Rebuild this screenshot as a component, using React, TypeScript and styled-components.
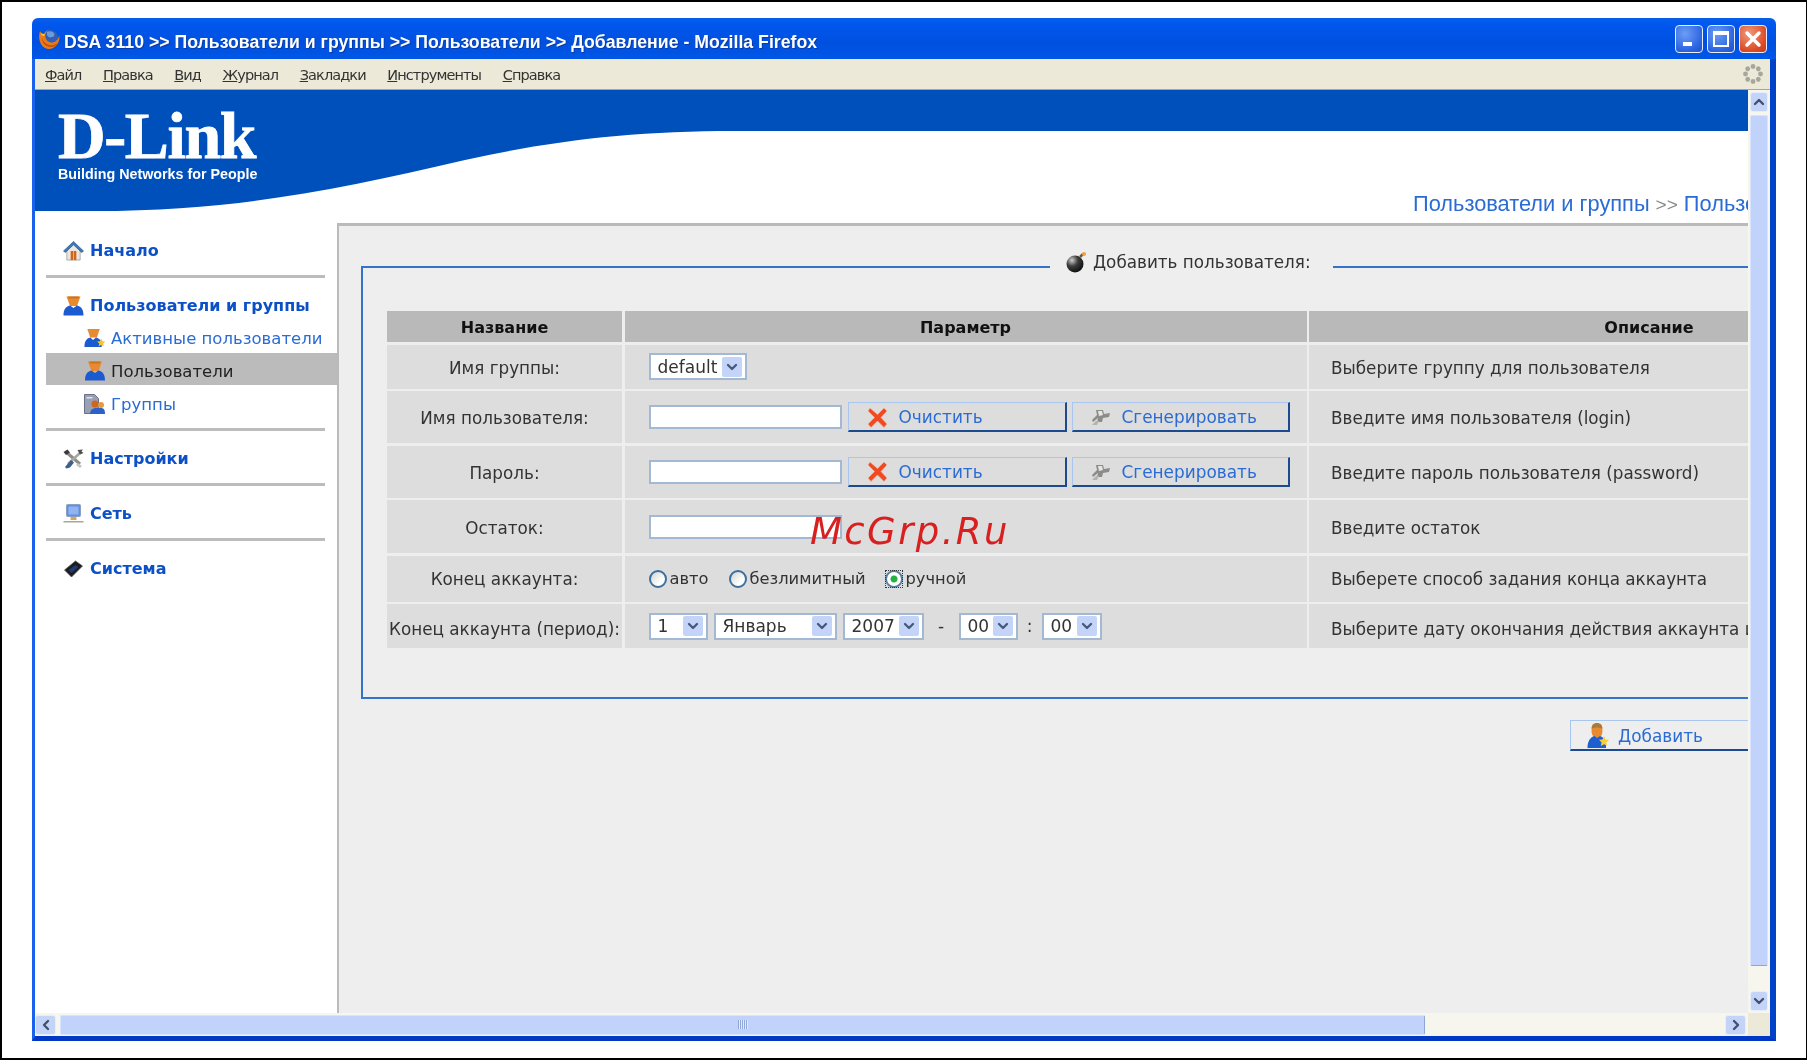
import React from 'react';
import styled, { createGlobalStyle } from 'styled-components';
import { ChevronDown, ChevronLeft, ChevronRight, ChevronUp } from 'lucide-react';

const FONT = '"DejaVu Sans", Verdana, sans-serif';
const LINK = '#2a6cd4';

const GlobalStyle = createGlobalStyle`
  html, body {
    margin: 0;
    padding: 0;
    background: #fff;
  }
  * {
    box-sizing: border-box;
  }
`;

const Page = styled.div`
  width: 1807px;
  height: 1060px;
  padding: 16px 30px 17px 30px;
  background: #fff;
  border: solid #000;
  border-width: 2px 1px 2px 2px;
  font-family: ${FONT};
  overflow: hidden;
  filter: blur(0.45px);
`;

const Window = styled.div`
  width: 1744px;
  height: 1023px;
  display: flex;
  flex-direction: column;
`;

const TitleBar = styled.div`
  height: 41px;
  flex: none;
  display: flex;
  align-items: center;
  padding: 0 9px 0 6px;
  border-radius: 6px 6px 0 0;
  background: linear-gradient(#0a5fe8 0%, #0058ee 12%, #0050e0 60%, #0057e6 100%);
`;

const TitleText = styled.div`
  flex: 1;
  margin-left: 3px;
  padding-top: 7px;
  color: #fff;
  font: bold 17.7px 'Liberation Sans', Arial, sans-serif;
  text-shadow: 1px 1px 0 #0a3ca8;
  white-space: nowrap;
`;

const WinButtons = styled.div`
  display: flex;
  gap: 4px;
`;

const WinButton = styled.div<{ $close?: boolean }>`
  width: 28px;
  height: 28px;
  display: flex;
  align-items: center;
  justify-content: center;
  border: 1px solid #e8eefc;
  border-radius: 4px;
  background: ${(p) =>
    p.$close
      ? 'radial-gradient(circle at 35% 30%, #f09a7c, #dc4a22 70%, #c23a18)'
      : 'radial-gradient(circle at 35% 30%, #6d9df5, #2a63e0 70%, #1f50c8)'};
`;

const WindowFrame = styled.div`
  flex: 1;
  min-height: 0;
  display: flex;
  flex-direction: column;
  border-style: solid;
  border-width: 0 6px 5px 3px;
  border-color: #0042d6 #0042c8 #0038c4 #1a62ee;
`;

const MenuBar = styled.div`
  height: 31px;
  flex: none;
  display: flex;
  align-items: center;
  justify-content: space-between;
  padding: 0 6px 0 10px;
  background: #ece9d8;
  border-bottom: 1px solid #a8a698;
  color: #333;
`;

const MenuList = styled.div`
  display: flex;
  gap: 21.5px;
  padding-top: 2px;
  font: 14.5px 'DejaVu Sans', Verdana, sans-serif;
  letter-spacing: -0.9px;
`;

const MenuKey = styled.span`
  text-decoration: underline;
`;

const Body = styled.div`
  flex: 1;
  min-height: 0;
  display: grid;
  grid-template-columns: 1fr 22px;
  grid-template-rows: 1fr 23px;
`;

const Viewport = styled.div`
  position: relative;
  min-width: 0;
  min-height: 0;
  display: flex;
  flex-direction: column;
  overflow: hidden;
  background: #fff;
`;

const Header = styled.header`
  position: relative;
  height: 133px;
  flex: none;
`;

const HeaderCurve = styled.svg`
  position: absolute;
  inset: 0;
  width: 100%;
  height: 100%;
`;

const Logo = styled.div`
  position: absolute;
  left: 23px;
  top: 19px;
  color: #fff;
`;

const LogoMark = styled.div`
  font: bold 66px/54px 'Liberation Serif', 'Times New Roman', serif;
  letter-spacing: -1.4px;
  -webkit-text-stroke: 0.8px #fff;
`;

const LogoTag = styled.div`
  margin-top: 4px;
  font: bold 14.3px/15px 'Liberation Sans', Arial, sans-serif;
  white-space: nowrap;
`;

const Breadcrumb = styled.div`
  position: absolute;
  left: 1378px;
  bottom: 5px;
  font: 21.8px/26px 'Liberation Sans', Arial, sans-serif;
  color: ${LINK};
  white-space: nowrap;
`;

const BreadcrumbSep = styled.span`
  color: #888;
  font-size: 19px;
`;

const Main = styled.div`
  flex: 1;
  min-height: 0;
  display: flex;
`;

const Sidebar = styled.nav`
  width: 302px;
  flex: none;
  padding-top: 11px;
`;

const NavRow = styled.a<{ $sub?: boolean; $active?: boolean; $gap?: boolean }>`
  height: 32px;
  display: flex;
  align-items: center;
  margin-left: 11px;
  margin-top: ${(p) => (p.$gap ? '2px' : '0')};
  padding-left: ${(p) => (p.$sub ? '38px' : '17px')};
  padding-top: ${(p) => (p.$active ? '4px' : p.$sub ? '2px' : '1px')};
  gap: ${(p) => (p.$sub ? '5px' : '6px')};
  font-family: ${FONT};
  font-size: ${(p) => (p.$sub ? '16.5px' : '16px')};
  font-weight: ${(p) => (p.$sub ? 'normal' : 'bold')};
  color: ${(p) => (p.$active ? '#222' : p.$sub ? LINK : '#0c50c8')};
  background: ${(p) => (p.$active ? '#bbbbbb' : 'transparent')};
  white-space: nowrap;

  svg {
    width: ${(p) => (p.$sub ? '22px' : '21px')};
    flex: none;
  }
`;

const NavDivider = styled.div`
  height: 3px;
  width: 279px;
  margin: 9px 0 11px 11px;
  background: #bcbcbc;
`;

const Content = styled.main`
  flex: 1;
  min-width: 0;
  display: flex;
  flex-direction: column;
  align-items: flex-start;
  overflow: hidden;
  padding: 23px 0 0 22px;
  background: #eeeeee;
  border-top: 3px solid #bababa;
  border-left: 2px solid #bababa;
`;

const Fieldset = styled.fieldset`
  width: 1656px;
  flex: none;
  margin: 0;
  padding: 26px 0 49px 24px;
  border: 2px solid #3572cc;
  min-width: 0;
`;

const Legend = styled.legend`
  display: flex;
  align-items: center;
  gap: 6px;
  height: 36px;
  margin-left: 663px;
  padding: 0 22px 10px 16px;
  font-size: 16.8px;
  color: #333;
  white-space: nowrap;
`;

const FormGrid = styled.div`
  display: grid;
  grid-template-columns: 235px 682px 680px;
  grid-template-rows: 31px 44px 52px 52px 53px 46px 44px;
  gap: 2.5px;
  font-size: 16.8px;
  color: #333;
`;

const HeadCell = styled.div`
  display: flex;
  align-items: center;
  justify-content: center;
  padding-top: 2px;
  background: #b9b9b9;
  color: #111;
  font-size: 16px;
  font-weight: bold;
`;

const LabelCell = styled.div<{ $dy?: number }>`
  display: flex;
  align-items: center;
  justify-content: center;
  padding-top: ${(p) => p.$dy ?? 2}px;
  background: #dddddd;
  white-space: nowrap;
`;

const ControlCell = styled.div`
  display: flex;
  align-items: center;
  padding-left: 24px;
  background: #dddddd;
`;

const DescCell = styled.div<{ $dy?: number }>`
  display: flex;
  align-items: center;
  padding-left: 22px;
  padding-top: ${(p) => p.$dy ?? 2}px;
  background: #dddddd;
  white-space: nowrap;
`;

const TextInput = styled.input`
  width: 193px;
  height: 24px;
  margin: 0 6px 0 0;
  padding: 0 4px;
  background: #fff;
  border: 2px solid #a3b8d2;
`;

const ActionButton = styled.button<{ $w: number }>`
  width: ${(p) => p.$w}px;
  height: 30px;
  flex: none;
  display: flex;
  align-items: center;
  gap: 11px;
  padding: 1px 0 0 18px;
  margin: 0 5px 0 0;
  background: #dddddd;
  border-style: solid;
  border-width: 1px 2px 2px 1px;
  border-color: #a9c6ee #1c4a8e #1c4a8e #a9c6ee;
  color: ${LINK};
  font-family: ${FONT};
  font-size: 16.9px;
  white-space: nowrap;
`;

const SelectBox = styled.div<{ $w: number }>`
  width: ${(p) => p.$w}px;
  height: 27px;
  flex: none;
  display: flex;
  align-items: center;
  justify-content: space-between;
  padding: 0 3px 0 7px;
  background: #fff;
  border: 2px solid #a3b8d2;
  font-size: 17px;
  color: #333;
  white-space: nowrap;
`;

const SelectArrow = styled.span`
  width: 20px;
  height: 20px;
  flex: none;
  display: flex;
  align-items: center;
  justify-content: center;
  border-radius: 2px;
  background: #c4d4f8;
  color: #46597c;
`;

const SelectRow = styled.div`
  display: flex;
  align-items: center;
  gap: 6px;
`;

const TimeSep = styled.span<{ $w: number }>`
  width: ${(p) => p.$w}px;
  margin: 0 -6px;
  text-align: center;
  font-size: 17px;
`;

const RadioGroup = styled.label<{ $w: number }>`
  width: ${(p) => p.$w}px;
  flex: none;
  display: flex;
  align-items: center;
  gap: 3px;
  font-size: 16.3px;
`;

const RadioDot = styled.span<{ $on?: boolean }>`
  position: relative;
  width: 18px;
  height: 18px;
  flex: none;
  border-radius: 50%;
  border: 2px solid ${(p) => (p.$on ? '#557f9e' : '#3a6f9e')};
  background: ${(p) =>
    p.$on
      ? 'radial-gradient(circle, #28b040 0 3px, #fff 4px)'
      : 'linear-gradient(135deg, #d4d4cc, #fff 70%)'};
  &::after {
    content: '';
    display: ${(p) => (p.$on ? 'block' : 'none')};
    position: absolute;
    inset: -2px;
    border: 1px dotted #333;
  }
`;

const Watermark = styled.div`
  position: absolute;
  left: 775px;
  top: 419px;
  font: oblique 37px/46px 'DejaVu Sans', sans-serif;
  letter-spacing: 2.4px;
  color: #d82020;
  white-space: nowrap;
  pointer-events: none;
`;

const AddButton = styled(ActionButton)`
  margin: 21px 0 0 1209px;
  height: 31px;
  flex-shrink: 0;
  padding-left: 16px;
  gap: 8px;
  background: #eeeeee;
  border-width: 1px 0 2px 1px;
`;

const VTrack = styled.div`
  display: flex;
  flex-direction: column;
  align-items: center;
  padding: 2px 2px 2px;
  background: #f6f5ee;
`;

const ScrollBtn = styled.div`
  width: 18px;
  height: 20px;
  flex: none;
  display: flex;
  align-items: center;
  justify-content: center;
  border: 1px solid #e6eefc;
  border-radius: 3px;
  background: #c3d4f8;
  color: #42506c;
`;

const VThumb = styled.div`
  width: 18px;
  height: 851px;
  margin-top: 3px;
  background: #c1d3fa;
  border: 1px solid #d8e4fc;
  border-bottom-color: #8ea6d4;
  border-radius: 2px;
`;

const VSpace = styled.div`
  flex: 1;
`;

const HTrack = styled.div`
  display: flex;
  align-items: center;
  padding: 0 2px 0 0;
  background: #f6f5ee;
`;

const HThumb = styled.div`
  width: 1365px;
  height: 20px;
  margin-left: 4px;
  display: flex;
  align-items: center;
  justify-content: center;
  background: #c1d3fa;
  border: 1px solid #d8e4fc;
  border-right-color: #8ea6d4;
  border-radius: 2px;
`;

const ThumbGrip = styled.div`
  width: 10px;
  height: 9px;
  background: repeating-linear-gradient(90deg, #8fa8d8 0 1px, #e4ecfc 1px 2px);
`;

const HBtn = styled(ScrollBtn)`
  width: 21px;
`;

const Corner = styled.div`
  background: #ece9d8;
`;

function FirefoxIcon() {
  return (
    <svg width="23" height="21" viewBox="0 0 23 21">
      <circle cx="12" cy="10" r="8" fill="#2f5fb8" />
      <path d="M9 4c2-1 5-1 7 1 1 2 0 4-2 4-2 1-4 0-5-2z" fill="#6f9ad8" />
      <path d="M2 3c1 2 2 3 4 3 1-2 3-4 6-5C8 3 6 7 8 11c2 4 7 5 11 1 1-1 2-3 2-5 2 6-3 14-10 14C4 21-1 12 2 3z" fill="#ea7a16" />
      <path d="M4 10c0 5 4 9 9 9 3 0 6-2 7-5-2 3-6 4-9 3-4-1-6-4-7-7z" fill="#c24c0c" />
      <path d="M3 5c0 2 1 3 3 3l1-2C5 6 4 6 3 5z" fill="#f8c83e" />
    </svg>
  );
}

function Throbber() {
  const dots = [0, 45, 90, 135, 180, 225, 270, 315];
  return (
    <svg width="22" height="22" viewBox="0 0 22 22">
      {dots.map((d) => (
        <circle key={d} cx="11" cy="3.5" r="2.4" fill="#a6a69c" transform={`rotate(${d} 11 11)`} />
      ))}
    </svg>
  );
}

function HomeIcon() {
  return (
    <svg height="20" viewBox="0 0 22 21">
      <path d="M4 9v11h14V9L11 3z" fill="#ece8e0" stroke="#8a8a8a" strokeWidth=".7" />
      <path d="M0.500 10.500 11 0.500 21.500 10.500l-2 1.500L11 4 2.500 12z" fill="#3f78b4" stroke="#245490" strokeWidth=".7" />
      <rect x="8" y="10.500" width="6" height="9.500" fill="#d2651c" />
      <rect x="10.500" y="10.500" width="1" height="9.500" fill="#f4b27a" />
    </svg>
  );
}

function UserIcon() {
  return (
    <svg height="20" viewBox="0 0 21 20">
      <path d="M3.500 0.500h14l-3.500 9.500h-7z" fill="#e88a30" />
      <path d="M5 0.500h11l-.5 2h-10z" fill="#c87420" />
      <path d="M0.500 19.500c0-6 2-9 6.500-10l3.500 2.500 3.500-2.500c4.500 1 6.500 4 6.500 10z" fill="#1c5ad0" />
    </svg>
  );
}

function ActiveUserIcon() {
  return (
    <svg height="20" viewBox="0 0 23 20">
      <path d="M3.500 0.500h13l-3 9h-7z" fill="#e88a30" />
      <path d="M0.500 19.500c0-6 2-9 6-10l3 2.500 3-2.500c3 1 5 2 6 5v5z" fill="#1c5ad0" />
      <path d="M18 10.500l1.300 2.800 3 .3-2.200 2.100.6 3-2.700-1.500-2.700 1.500.6-3-2.200-2.100 3-.3z" fill="#f5c62a" />
    </svg>
  );
}

function GroupIcon() {
  return (
    <svg height="20" viewBox="0 0 22 20">
      <path d="M0.500 0.500h10l4 4v15h-14z" fill="#9aa0b4" stroke="#6a7088" />
      <rect x="2.500" y="3" width="6" height="1.500" fill="#dfe2ea" />
      <circle cx="11" cy="10" r="3.500" fill="#d0661e" />
      <circle cx="17" cy="11" r="3" fill="#e89a3a" />
      <path d="M6 20c0-4 3-6 6-6h5c3 0 4 2 4 6z" fill="#2c62c8" />
    </svg>
  );
}

function ToolsIcon() {
  return (
    <svg height="20" viewBox="0 0 21 20">
      <path d="M3 3l14 12" stroke="#8c8c88" strokeWidth="3" />
      <path d="M18 3 5 15" stroke="#a6a6a2" strokeWidth="2.500" />
      <path d="M8 11 2 18l1.500 1.500 3.500-1 4-5z" fill="#3c5f8c" />
      <path d="M0.500 3l4-2.500 2.500 3-4 2.500z" fill="#3a3a38" />
      <path d="M14.500 1l5.500-.5-1.500 2 2 1.500-3.500 1.500z" fill="#50504c" />
      <path d="M15 14l4 3-2 2-4-3z" fill="#c4c4c0" />
    </svg>
  );
}

function NetworkIcon() {
  return (
    <svg height="20" viewBox="0 0 20 20">
      <rect x="3" y="0.500" width="14" height="12" rx="1" fill="#5f8fe0" stroke="#8aa0c4" />
      <rect x="5" y="2.500" width="10" height="8" fill="#8fb4f0" />
      <rect x="7" y="13" width="6" height="3" fill="#d8a85a" />
      <rect x="0" y="17" width="20" height="1.500" fill="#a8a89a" />
    </svg>
  );
}

function ChipIcon() {
  return (
    <svg height="20" viewBox="0 0 20 20">
      <path d="M1 11 12 2l7 5-11 11z" fill="#1c1c20" stroke="#555" strokeWidth=".8" />
      <path d="M5 11l7-5 3 2-7 6z" fill="#203a78" />
    </svg>
  );
}

function BombIcon() {
  return (
    <svg width="21" height="22" viewBox="0 0 21 22">
      <defs>
        <radialGradient id="bomb" cx="32%" cy="28%" r="78%">
          <stop offset="0" stopColor="#d0d0d0" />
          <stop offset=".45" stopColor="#3e3e3e" />
          <stop offset="1" stopColor="#0c0c0c" />
        </radialGradient>
      </defs>
      <circle cx="9" cy="13" r="8.500" fill="url(#bomb)" />
      <path d="M14 6l3-3" stroke="#6c5a3e" strokeWidth="2.500" />
      <circle cx="18" cy="3" r="2" fill="#f0a040" />
    </svg>
  );
}

function ClearIcon() {
  return (
    <svg width="21" height="21" viewBox="0 0 21 21">
      <path d="M3 1 10.500 7.500 17 1l3 3-6 6.500L20 17l-3 3.500-6.500-6.500L4 20.500 1 17l6.500-6.500L1 4z" fill="#ee4a24" stroke="#f6b8a0" strokeWidth=".6" />
    </svg>
  );
}

function GenerateIcon() {
  return (
    <svg width="20" height="18" viewBox="0 0 20 18">
      <path d="M5 2h7l1 4 6-1-1 4-6 1-1 4H6l1-4-5 4-1-2 5-5z" fill="#8c8c88" />
      <path d="M7 3h4l1 4-4 1z" fill="#e6e6e2" />
      <path d="M1 17l4-4h3l-2 4z" fill="#b4b4ae" />
    </svg>
  );
}

function AddUserIcon() {
  return (
    <svg width="23" height="26" viewBox="0 0 23 26">
      <ellipse cx="10" cy="8" rx="5.500" ry="7.500" fill="#e88a30" />
      <path d="M4.500 6c0-4 2-6 5.500-6s5.500 2 5.500 6c-2-2-9-2-11 0z" fill="#a87a3c" />
      <path d="M0.500 25c0-7 3-11 7-12l2.500 2 3-2c3 1 5 3 6 7v5z" fill="#1e5fd0" />
      <path d="M17 13l1.500 3.400 3.500.4-2.600 2.600.8 3.600-3.200-1.800-3.200 1.800.8-3.600L12 16.800l3.500-.4z" fill="#f8cf3a" />
    </svg>
  );
}

function Select({ w, value }: { w: number; value: string }) {
  return (
    <SelectBox $w={w}>
      {value}
      <SelectArrow>
        <ChevronDown size={16} strokeWidth={3.5} />
      </SelectArrow>
    </SelectBox>
  );
}

function CredentialControls() {
  return (
    <>
      <TextInput />
      <ActionButton $w={219}>
        <ClearIcon />
        Очистить
      </ActionButton>
      <ActionButton $w={218}>
        <GenerateIcon />
        Сгенерировать
      </ActionButton>
    </>
  );
}

export default function App() {
  return (
    <Page>
      <GlobalStyle />
      <Window>
        <TitleBar>
          <FirefoxIcon />
          <TitleText>DSA 3110 &gt;&gt; Пользователи и группы &gt;&gt; Пользователи &gt;&gt; Добавление - Mozilla Firefox</TitleText>
          <WinButtons>
            <WinButton>
              <svg width="16" height="16" viewBox="0 0 16 16">
                <rect x="2" y="11" width="9" height="4" fill="#fff" />
              </svg>
            </WinButton>
            <WinButton>
              <svg width="18" height="18" viewBox="0 0 18 18">
                <path d="M2 2h14v14H2z" fill="none" stroke="#fff" strokeWidth="2" />
                <path d="M2 3.500h14" stroke="#fff" strokeWidth="3" />
              </svg>
            </WinButton>
            <WinButton $close>
              <svg width="18" height="18" viewBox="0 0 18 18">
                <path d="M3 3l12 12M15 3 3 15" stroke="#fff" strokeWidth="3.500" strokeLinecap="round" />
              </svg>
            </WinButton>
          </WinButtons>
        </TitleBar>
        <WindowFrame>
          <MenuBar>
            <MenuList>
              <span><MenuKey>Ф</MenuKey>айл</span>
              <span><MenuKey>П</MenuKey>равка</span>
              <span><MenuKey>В</MenuKey>ид</span>
              <span><MenuKey>Ж</MenuKey>урнал</span>
              <span><MenuKey>З</MenuKey>акладки</span>
              <span><MenuKey>И</MenuKey>нструменты</span>
              <span><MenuKey>С</MenuKey>правка</span>
            </MenuList>
            <Throbber />
          </MenuBar>
          <Body>
            <Viewport>
              <Header>
                <HeaderCurve viewBox="0 0 1713 133" preserveAspectRatio="none">
                  <path d="M0 0H1713V41H700C600 41 520 50 430 70 300 100 200 121 60 121H0Z" fill="#0050bc" />
                </HeaderCurve>
                <Logo>
                  <LogoMark>D-Link</LogoMark>
                  <LogoTag>Building Networks for People</LogoTag>
                </Logo>
                <Breadcrumb>
                  Пользователи и группы <BreadcrumbSep>&gt;&gt;</BreadcrumbSep> Пользователи
                </Breadcrumb>
              </Header>
              <Main>
                <Sidebar>
                  <NavRow><HomeIcon />Начало</NavRow>
                  <NavDivider />
                  <NavRow><UserIcon />Пользователи и группы</NavRow>
                  <NavRow $sub><ActiveUserIcon />Активные пользователи</NavRow>
                  <NavRow $sub $active><UserIcon />Пользователи</NavRow>
                  <NavRow $sub $gap><GroupIcon />Группы</NavRow>
                  <NavDivider />
                  <NavRow><ToolsIcon />Настройки</NavRow>
                  <NavDivider />
                  <NavRow><NetworkIcon />Сеть</NavRow>
                  <NavDivider />
                  <NavRow><ChipIcon />Система</NavRow>
                </Sidebar>
                <Content>
                  <Fieldset>
                    <Legend><BombIcon />Добавить пользователя:</Legend>
                    <FormGrid>
                      <HeadCell>Название</HeadCell>
                      <HeadCell>Параметр</HeadCell>
                      <HeadCell>Описание</HeadCell>

                      <LabelCell>Имя группы:</LabelCell>
                      <ControlCell><Select w={98} value="default" /></ControlCell>
                      <DescCell>Выберите группу для пользователя</DescCell>

                      <LabelCell>Имя пользователя:</LabelCell>
                      <ControlCell><CredentialControls /></ControlCell>
                      <DescCell>Введите имя пользователя (login)</DescCell>

                      <LabelCell>Пароль:</LabelCell>
                      <ControlCell><CredentialControls /></ControlCell>
                      <DescCell>Введите пароль пользователя (password)</DescCell>

                      <LabelCell>Остаток:</LabelCell>
                      <ControlCell><TextInput /></ControlCell>
                      <DescCell>Введите остаток</DescCell>

                      <LabelCell $dy={0}>Конец аккаунта:</LabelCell>
                      <ControlCell>
                        <RadioGroup $w={80}><RadioDot />авто</RadioGroup>
                        <RadioGroup $w={156}><RadioDot />безлимитный</RadioGroup>
                        <RadioGroup $w={100}><RadioDot $on />ручной</RadioGroup>
                      </ControlCell>
                      <DescCell $dy={0}>Выберете способ задания конца аккаунта</DescCell>

                      <LabelCell $dy={5}>Конец аккаунта (период):</LabelCell>
                      <ControlCell>
                        <SelectRow>
                          <Select w={59} value="1" />
                          <Select w={123} value="Январь" />
                          <Select w={81} value="2007" />
                          <TimeSep $w={35}>-</TimeSep>
                          <Select w={59} value="00" />
                          <TimeSep $w={24}>:</TimeSep>
                          <Select w={60} value="00" />
                        </SelectRow>
                      </ControlCell>
                      <DescCell $dy={5}>Выберите дату окончания действия аккаунта и времени</DescCell>
                    </FormGrid>
                  </Fieldset>
                  <AddButton $w={220}><AddUserIcon />Добавить</AddButton>
                </Content>
              </Main>
              <Watermark>McGrp.Ru</Watermark>
            </Viewport>
            <VTrack>
              <ScrollBtn><ChevronUp size={16} strokeWidth={3.5} /></ScrollBtn>
              <VThumb />
              <VSpace />
              <ScrollBtn><ChevronDown size={16} strokeWidth={3.5} /></ScrollBtn>
            </VTrack>
            <HTrack>
              <HBtn><ChevronLeft size={16} strokeWidth={3.5} /></HBtn>
              <HThumb><ThumbGrip /></HThumb>
              <VSpace />
              <HBtn><ChevronRight size={16} strokeWidth={3.5} /></HBtn>
            </HTrack>
            <Corner />
          </Body>
        </WindowFrame>
      </Window>
    </Page>
  );
}
